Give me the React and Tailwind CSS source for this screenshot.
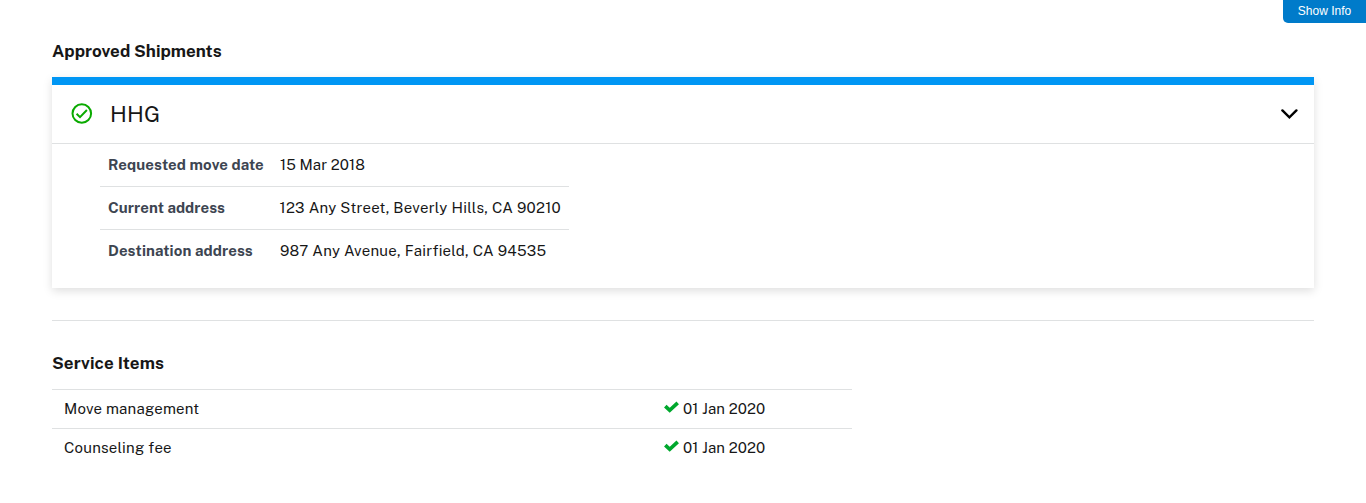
const details = [
  ["Requested move date", "15 Mar 2018", "tracking-[0.11px]", "tracking-[0.06px]"],
  ["Current address", "123 Any Street, Beverly Hills, CA 90210", "tracking-[0.05px]", "tracking-[0.25px]"],
  ["Destination address", "987 Any Avenue, Fairfield, CA 94535", "tracking-[0.09px]", "tracking-[0.245px]"],
];
const items = [
  ["Move management", "01 Jan 2020"],
  ["Counseling fee", "01 Jan 2020"],
];

function CircleCheck() {
  return (
    <svg viewBox="0 0 21 21" className="relative -top-px size-[21px] overflow-visible fill-none stroke-[#0aaa00] stroke-2">
      <circle cx="10.8" cy="10.5" r="9.3" />
      <path d="M5.6 10.8 9 14.1 15.9 7" />
    </svg>
  );
}

function Check() {
  return (
    <svg viewBox="0 0 15 12" className="mb-[5px] h-3 w-[15px] overflow-visible fill-none stroke-[#00a82d]" strokeWidth="3.7">
      <path d="M1.3 5.2 5.7 9.3 13.7 1.9" />
    </svg>
  );
}

export default function App() {
  return (
    <div className="relative h-[503px] overflow-hidden bg-white px-[52px] pt-10 font-['Public_Sans','Inter',sans-serif] text-[15px] text-[#171717]">
      <button className="absolute top-0 right-0 h-[23px] w-[83px] rounded-bl-[5px] bg-[#007bca] pb-0.5 font-['Liberation_Sans',sans-serif] text-[12px] text-white">Show Info</button>
      <h4 className="h-[37px] text-[17px] leading-[23px] font-bold">Approved Shipments</h4>
      <section className="h-[211px] border-t-8 border-[#0096f4] shadow-[0_3px_9px_rgba(0,0,0,0.13)]">
        <header className="flex h-[59px] items-center border-b border-[#dfe1e2] pr-4 pl-[19px]">
          <CircleCheck />
          <h3 className="ml-[18px] flex-1 text-[22px] tracking-[0.1px]">HHG</h3>
          <svg viewBox="0 0 18 12" className="h-3 w-[18px] fill-none stroke-black" strokeWidth="2.4" strokeLinecap="round">
            <path d="M2.4 2.4 9.4 9.3 16.4 2.4" />
          </svg>
        </header>
        <div className="ml-12 w-[469px]">
          {details.map(([label, value, labelSpacing, valueSpacing]) => (
            <div key={label} className="flex h-[43px] items-center border-b border-[#dfe1e2] px-2 last:border-0">
              <span className={`w-[172px] font-bold whitespace-nowrap text-[#3d4551] ${labelSpacing}`}>{label}</span>
              <span className={`whitespace-nowrap ${valueSpacing}`}>{value}</span>
            </div>
          ))}
        </div>
      </section>
      <hr className="mt-8 border-[#dfe1e2]" />
      <h4 className="mt-[31px] h-[37px] text-[17px] leading-[23px] font-bold tracking-[0.1px]">Service Items</h4>
      <div className="w-[800px]">
        {items.map(([label, value]) => (
          <div key={label} className="flex h-[39px] items-center border-t border-[#dfe1e2] pl-3">
            <span className="w-[600px] tracking-[0.2px]">{label}</span>
            <Check />
            <span className="ml-1 tracking-[0.05px]">{value}</span>
          </div>
        ))}
      </div>
    </div>
  );
}
